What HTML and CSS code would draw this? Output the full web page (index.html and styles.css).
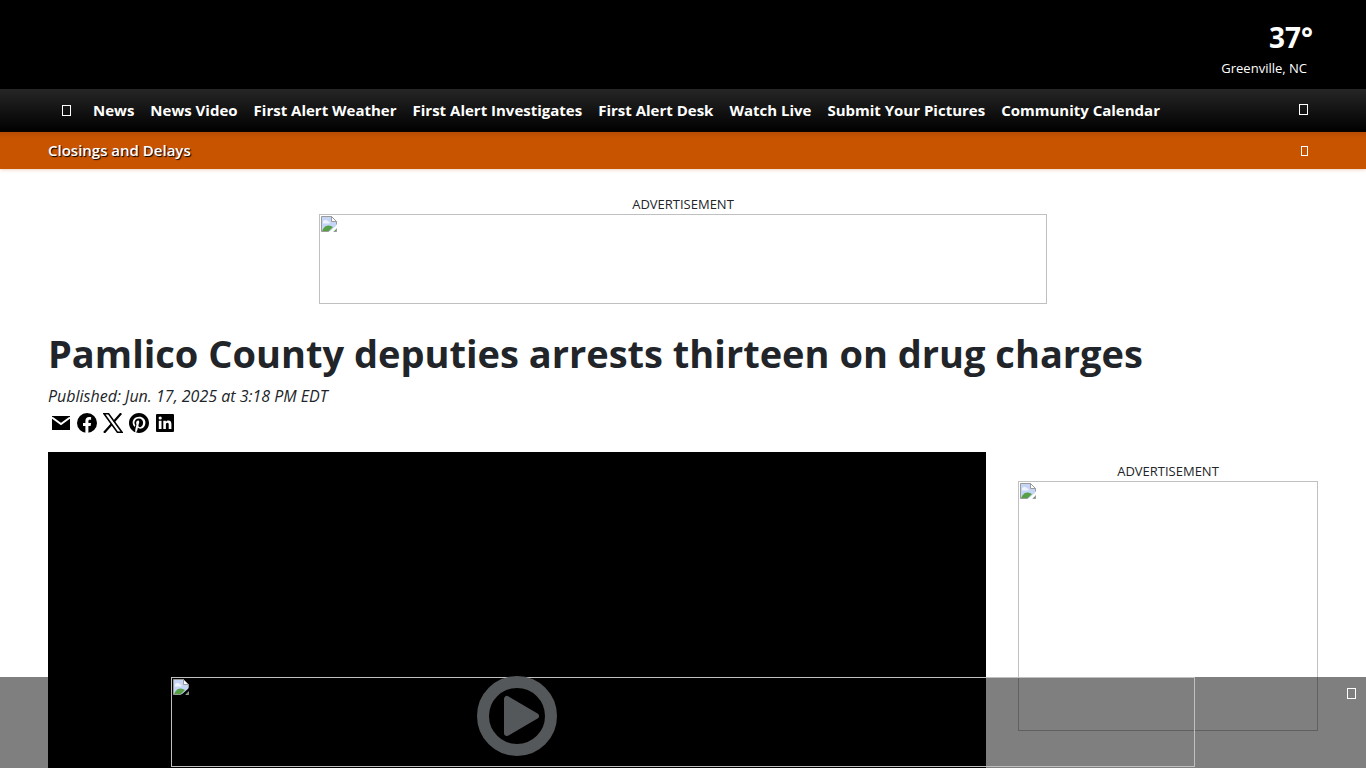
FILE: index.html
```html
<!DOCTYPE html>
<html lang="en">
<head>
<meta charset="utf-8">
<meta name="viewport" content="width=device-width, initial-scale=1">
<title>Pamlico County deputies arrests thirteen on drug charges</title>
<link rel="stylesheet" href="styles.css">
</head>
<body>
<svg class="defs" aria-hidden="true">
  <symbol id="missing" viewBox="0 0 16 16">
    <path d="M.5.5h10l5 5v10H.5z" fill="#c4d5f5"/>
    <path d="M2 5.500c1-2 4-2 5 0h1.500v2H2z" fill="#eef3fd"/>
    <path d="M1 15.500c1-3 3-6 6.500-6 2 0 3 1 4.500 1.500l-4.500 4.500z" fill="#57a046"/>
    <path d="M12.500 15.500l3-3v3z" fill="#57a046"/>
    <path d="M.5 15.500V.5h10l5 5v3" fill="none" stroke="#9a9a9a"/>
    <path d="M10.500.5v5h5z" fill="#fff" stroke="#9a9a9a"/>
    <path d="M.5 15.500h7M12.500 15.500h3V12" fill="none" stroke="#9a9a9a"/>
    <path d="M8 16l8-7v3l-4 4z" fill="var(--tear)"/>
  </symbol>
</svg>
<header class="masthead">
  <a class="weather" href="#weather">
    <span class="temp">37°</span>
    <span class="city">Greenville, NC</span>
  </a>
</header>
<nav class="nav" aria-label="Main">
  <a class="nav-home" href="#home" aria-label="Home"><span class="glyph"></span></a>
  <ul class="nav-list">
    <li><a href="#news">News</a></li>
    <li><a href="#video">News Video</a></li>
    <li><a href="#first-alert-weather">First Alert Weather</a></li>
    <li><a href="#investigates">First Alert Investigates</a></li>
    <li><a href="#desk">First Alert Desk</a></li>
    <li><a href="#live">Watch Live</a></li>
    <li><a href="#pictures">Submit Your Pictures</a></li>
    <li><a href="#calendar">Community Calendar</a></li>
  </ul>
  <button class="icon-button nav-search" type="button" aria-label="Search"><span class="glyph"></span></button>
</nav>
<div class="alert">
  <a href="#closings">Closings and Delays</a>
  <button class="icon-button alert-next" type="button" aria-label="Show alerts"><span class="glyph glyph-small"></span></button>
</div>
<main class="page">
  <aside class="ad ad-top" aria-label="Advertisement">
    <p class="ad-label">ADVERTISEMENT</p>
    <div class="frame frame-leader"><svg class="missing"><use href="#missing"/></svg></div>
  </aside>
  <h1 class="headline">Pamlico County deputies arrests thirteen on drug charges</h1>
  <p class="published">Published: Jun. 17, 2025 at 3:18 PM EDT</p>
  <div class="share">
    <a href="#email" aria-label="Email"><svg viewBox="0 0 20 20"><path d="M1 3h18v14H1z"/><path d="M1 4.500l9 6.500 9-6.500" fill="none" stroke="#fff" stroke-width="2"/></svg></a>
    <a href="#facebook" aria-label="Facebook"><svg viewBox="0 0 20 20"><circle cx="10" cy="10" r="10"/><path fill="#fff" d="M8.400 20v-7H6v-3h2.400V7.800c0-2.500 1.500-3.800 3.700-3.800 1 0 2 .2 2 .2v2.500h-1.200c-1.200 0-1.500.7-1.500 1.400V10h2.700l-.5 3h-2.200v7z"/></svg></a>
    <a href="#x" aria-label="X"><svg viewBox="0 0 20 20"><g fill="none" stroke="#000"><path d="M1 .8h4.600L19 19.200h-4.600z" stroke-width="1.600"/><path d="M18.200.3l-7.400 8.400M8.600 11.300L1 19.800" stroke-width="2.200"/></g></svg></a>
    <a href="#pinterest" aria-label="Pinterest"><svg viewBox="0 0 24 24"><path d="M12 0C5.400 0 0 5.400 0 12c0 5.100 3.200 9.400 7.600 11.200-.1-.9-.2-2.400 0-3.400.2-.9 1.400-6 1.400-6s-.4-.7-.4-1.800c0-1.700 1-2.900 2.200-2.900 1 0 1.500.8 1.500 1.700 0 1-.7 2.600-1 4-.3 1.200.6 2.200 1.800 2.200 2.100 0 3.800-2.200 3.800-5.500 0-2.900-2.100-4.900-5-4.900-3.400 0-5.400 2.600-5.400 5.200 0 1 .4 2.100.9 2.700.1.100.1.200.1.300l-.3 1.400c-.1.200-.2.300-.4.200-1.500-.7-2.400-2.900-2.400-4.600 0-3.800 2.800-7.300 7.900-7.300 4.200 0 7.400 3 7.400 6.900 0 4.100-2.600 7.500-6.200 7.500-1.200 0-2.400-.6-2.800-1.400l-.7 2.900c-.3 1-1 2.300-1.500 3.100C9.600 23.800 10.800 24 12 24c6.600 0 12-5.400 12-12S18.600 0 12 0z"/></svg></a>
    <a href="#linkedin" aria-label="LinkedIn"><svg viewBox="0 0 20 20"><rect x="1" y="1" width="18" height="18" rx="1"/><g fill="#fff"><circle cx="5.200" cy="5" r="1.600"/><path d="M3.800 7.800h2.700V16H3.800zM8.300 7.800h2.600V9c.5-.9 1.400-1.400 2.500-1.400 2.300 0 3 1.500 3 3.700V16h-2.700v-4.200c0-1.100-.2-2-1.300-2s-1.500.8-1.500 2V16H8.300z"/></g></svg></a>
  </div>
  <div class="columns">
    <section class="video" aria-label="Video">
      <button class="play" type="button" aria-label="Play video">
        <svg viewBox="0 0 80 80"><circle cx="40" cy="40" r="34" fill="none" stroke="#55585b" stroke-width="12"/><path d="M30 23v34l29-17z" fill="#55585b" stroke="#55585b" stroke-width="6" stroke-linejoin="round"/></svg>
      </button>
    </section>
    <aside class="ad ad-side" aria-label="Advertisement">
      <p class="ad-label">ADVERTISEMENT</p>
      <div class="frame frame-box"><svg class="missing"><use href="#missing"/></svg></div>
    </aside>
  </div>
</main>
<div class="sticky-ad">
  <div class="frame frame-sticky"><svg class="missing missing-dark"><use href="#missing"/></svg></div>
  <button class="icon-button sticky-close" type="button" aria-label="Close advertisement"><span class="glyph"></span></button>
</div>
</body>
</html>
```
FILE: styles.css
```css
* { box-sizing: border-box; }

body {
  margin: 0;
  background: #fff;
  color: #212529;
  font-family: "Segoe UI", "Open Sans", "Noto Sans", sans-serif;
  font-size: 16px;
  line-height: 24px;
}

a { color: inherit; text-decoration: none; }
p, h1, ul { margin: 0; padding: 0; }
.defs { position: absolute; width: 0; height: 0; }

.masthead {
  display: flex;
  justify-content: flex-end;
  padding: 19px 53px 8px 48px;
  background: #000;
  color: #fff;
}
.weather { display: flex; flex-direction: column; align-items: flex-end; }
.temp { font-size: 28px; font-weight: 700; line-height: 36px; }
.city { font-size: 13px; line-height: 26px; padding-right: 6px; }

.nav {
  display: flex;
  align-items: center;
  height: 43px;
  padding: 0 48px;
  background: linear-gradient(#262626, #000);
  color: #fff;
}
.nav-home { display: flex; padding: 0 22px 0 14px; }
.nav-list {
  display: flex;
  gap: 16px;
  padding-bottom: 2px;
  list-style: none;
  font-size: 15px;
  font-weight: 700;
  white-space: nowrap;
}
.icon-button {
  display: flex;
  padding: 0;
  border: 0;
  background: none;
  color: #fff;
}
.glyph { width: 9px; height: 11px; border: 1px solid; }
.glyph-small { width: 7px; height: 10px; }
.nav-search { margin-left: auto; padding: 0 10px 2px 0; }

.alert {
  position: relative;
  display: flex;
  align-items: center;
  justify-content: space-between;
  height: 37px;
  padding: 0 48px 2px;
  background: linear-gradient(#b84c04, #c85400 6px);
  box-shadow: 0 1px 3px #c8540044;
  color: #fff;
  font-size: 15px;
  font-weight: 600;
  text-shadow: 1px 1px 1px #000;
}
.alert-next { padding: 2px 10px 0 0; }

.page { padding: 26px 48px 48px; }
.ad { display: flex; flex-direction: column; align-items: center; }
.ad-label { font-size: 13px; line-height: 19px; }
.frame {
  --tear: #fff;
  max-width: 100%;
  padding: 1px;
  border: 1px solid #c0c0c0;
}
.missing { display: block; width: 16px; height: 16px; }
.missing-dark { --tear: #000; }
.frame-leader { width: 728px; height: 90px; }
.frame-box { width: 300px; height: 250px; }

.headline {
  margin-top: 25px;
  font-size: 38px;
  font-weight: 660;
  line-height: 48px;
}
.published { margin-top: 7px; font-size: 16px; font-style: italic; }
.share { display: flex; gap: 6px; padding: 5px 3px 0; }
.share svg { display: block; width: 20px; height: 20px; }

.columns {
  display: grid;
  grid-template-columns: 1fr 300px;
  gap: 32px;
  margin-top: 19px;
}
.video {
  display: grid;
  place-items: center;
  align-self: start;
  aspect-ratio: 16 / 9;
  background: #000;
}
.play {
  position: relative;
  z-index: 3;
  padding: 0;
  border: 0;
  background: none;
}
.play svg { display: block; width: 80px; height: 80px; }
.ad-side { padding-top: 10px; }

.sticky-ad {
  position: fixed;
  inset: auto 0 0;
  z-index: 2;
  display: flex;
  justify-content: center;
  padding-bottom: 1px;
  background: rgba(0, 0, 0, .5);
}
.frame-sticky { width: 1024px; height: 90px; }
.sticky-close { position: absolute; top: 11px; right: 10px; }
```
